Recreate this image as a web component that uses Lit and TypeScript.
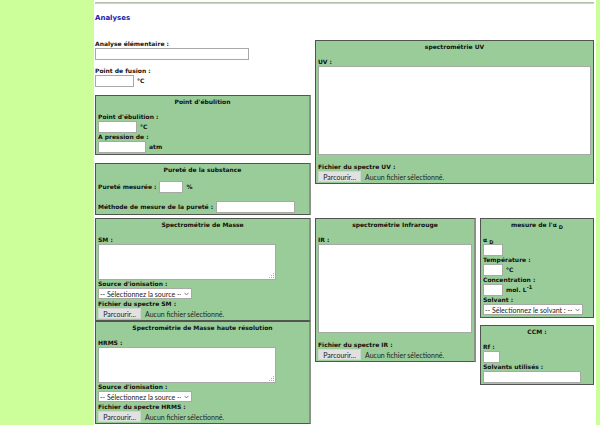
import { LitElement, html, css, nothing } from "lit";
import { customElement, property, state } from "lit/decorators.js";

const controls = css`
  * { box-sizing: border-box; }
  input, textarea, select, button {
    margin: 0;
    border: 1px solid #a5aaa5;
    border-radius: 0;
    background: #fff;
    color: #222;
    font: 7px/8px Lato, "Noto Sans", sans-serif;
  }
  input { height: 12px; padding: 0 2px; }
  label { line-height: 8px; }
`;

@customElement("form-panel")
export class FormPanel extends LitElement {
  static styles = css`
    :host {
      display: block;
      box-sizing: border-box;
      border: 1px solid #505550;
      padding: 2px 2px 1px;
      background: #99cc99;
    }
    :host([shaded]) { border-right: 2px solid #8a928a; }
    h2 {
      margin: 0 0 7px;
      font-size: 6px;
      line-height: 8px;
      text-align: center;
    }
  `;
  render() {
    return html`<h2><slot name="title"></slot></h2><slot></slot>`;
  }
}

@customElement("file-field")
export class FileField extends LitElement {
  @property() label = "";
  @state() private fileName = "";
  static styles = [controls, css`
    :host { display: block; }
    label { display: block; }
    .line { display: flex; align-items: center; gap: 4px; font: 7px/8px Lato, "Noto Sans", sans-serif; color: #222; }
    button { width: 43px; height: 11px; padding: 0; border-color: #d0d5d0; background: #e1e1e1; }
    input { display: none; }
  `];
  private pick() {
    this.renderRoot.querySelector<HTMLInputElement>("input")?.click();
  }
  private changed(e: Event) {
    this.fileName = (e.target as HTMLInputElement).files?.[0]?.name ?? "";
  }
  render() {
    return html`
      <label for="browse">${this.label}</label>
      <div class="line">
        <button id="browse" type="button" @click=${this.pick}>Parcourir...</button>
        <input type="file" @change=${this.changed} />
        <span>${this.fileName || "Aucun fichier sélectionné."}</span>
      </div>`;
  }
}

@customElement("app-root")
export class AppRoot extends LitElement {
  static styles = [controls, css`
    :host {
      display: flex;
      min-height: 100vh;
      background: #ccff99;
      color: #111;
      font: bold 6px/8px "DejaVu Sans", Verdana, sans-serif;
    }
    main {
      flex: 1;
      min-width: 0;
      margin: 0 4px 0 94px;
      padding: 2px 2px 0 1px;
      background: #fff;
    }
    hr { margin: 0; height: 2px; border: 0; border-top: 1px solid #b4bea8; border-bottom: 1px solid #c8d6ba; }
    h1 { margin: 9px 0 17px; font-size: 7px; line-height: 10px; color: #1a1aa6; }
    .grid { display: grid; grid-template-columns: 216fr 161fr 114fr; gap: 3px 4px; align-items: start; }
    .basics { display: flex; flex-direction: column; gap: 8px; }
    .free { display: flex; flex-direction: column; gap: 7px; }
    .wide { grid-column: span 2; }
    .side { display: flex; flex-direction: column; gap: 7px; }
    .field { display: flex; flex-direction: column; align-items: flex-start; }
    .unit, .inline { display: flex; align-items: center; gap: 3px; }
    .inline + .inline { margin-top: 8px; }
    .w16 { width: 17px; }
    .w20 { width: 20px; }
    .w24 { width: 24px; }
    .w39 { width: 39px; }
    .w48 { width: 48px; }
    .w79 { width: 79px; }
    .w94 { width: 94px; }
    .w98 { width: 98px; }
    .w100 { width: 100px; }
    .w154 { width: 154px; }
    textarea { display: block; width: 100%; padding: 2px; resize: none; }
    .spectrum { height: 89px; margin-bottom: 8px; }
    .notes { position: relative; width: 178px; height: 36px; }
    .notes textarea { height: 100%; }
    .grip { position: absolute; right: 2px; bottom: 2px; width: 5px; height: 5px; pointer-events: none; }
    .select { position: relative; margin-bottom: 1px; }
    .select select { display: block; appearance: none; height: 11px; padding: 0 10px 0 1px; }
    .chevron { position: absolute; right: 3px; top: 4px; width: 5px; height: 4px; pointer-events: none; }
    sub, sup { font-size: 5px; line-height: 0; }
  `];

  private input(id: string, label: string, width: string, unit: unknown = nothing) {
    return html`<div class="field">
      <label for=${id}>${label}</label>
      <div class="unit"><input id=${id} class=${width} /><span>${unit}</span></div>
    </div>`;
  }

  private select(id: string, label: string, prompt: string, width: string) {
    return html`<div class="field">
      <label for=${id}>${label}</label>
      <div class="select">
        <select id=${id} class=${width}><option>${prompt}</option></select>
        <svg class="chevron" viewBox="0 0 5 4"><path d="M.5 .8L2.5 3L4.5 .8" fill="none" stroke="#666" stroke-width=".8" /></svg>
      </div>
    </div>`;
  }

  private mass(id: string, title: string) {
    return html`<form-panel shaded>
      <span slot="title">${title}</span>
      <div class="field">
        <label for=${id}>${id} :</label>
        <div class="notes">
          <textarea id=${id}></textarea>
          <svg class="grip" viewBox="0 0 5 5"><path d="M4 0h1v1h-1zM2 2h1v1h-1zM4 2h1v1h-1zM0 4h1v1h-1zM2 4h1v1h-1zM4 4h1v1h-1z" fill="#aaa" /></svg>
        </div>
      </div>
      ${this.select(`${id}-source`, "Source d'ionisation :", "-- Sélectionnez la source --", "w94")}
      <file-field label=${`Fichier du spectre ${id} :`}></file-field>
    </form-panel>`;
  }

  render() {
    return html`<main>
      <hr />
      <h1>Analyses</h1>
      <div class="grid">
        <div class="basics">
          <div class="free">
            ${this.input("elementaire", "Analyse élémentaire :", "w154")}
            ${this.input("fusion", "Point de fusion :", "w39", "°C")}
          </div>
          <form-panel shaded>
            <span slot="title">Point d'ébulition</span>
            ${this.input("ebulition", "Point d'ébulition :", "w39", "°C")}
            ${this.input("pression", "A pression de :", "w48", "atm")}
          </form-panel>
          <form-panel shaded>
            <span slot="title">Pureté de la substance</span>
            <div class="inline"><label for="purete">Pureté mesurée :</label><input id="purete" class="w24" /><span>%</span></div>
            <div class="inline"><label for="methode">Méthode de mesure de la pureté :</label><input id="methode" class="w79" /></div>
          </form-panel>
        </div>
        <form-panel class="wide">
          <span slot="title">spectrométrie UV</span>
          <label for="uv">UV :</label>
          <textarea id="uv" class="spectrum"></textarea>
          <file-field label="Fichier du spectre UV :"></file-field>
        </form-panel>
        <div>
          ${this.mass("SM", "Spectrométrie de Masse")}
          ${this.mass("HRMS", "Spectrométrie de Masse haute résolution")}
        </div>
        <form-panel shaded>
          <span slot="title">spectrométrie Infrarouge</span>
          <label for="ir">IR :</label>
          <textarea id="ir" class="spectrum"></textarea>
          <file-field label="Fichier du spectre IR :"></file-field>
        </form-panel>
        <div class="side">
          <form-panel>
            <span slot="title">mesure de l'α <sub>D</sub></span>
            <div class="field">
              <label for="alpha">α <sub>D</sub></label>
              <input id="alpha" class="w20" />
            </div>
            ${this.input("temperature", "Température :", "w20", "°C")}
            ${this.input("concentration", "Concentration :", "w20", html`mol. L<sup>-1</sup>`)}
            ${this.select("solvant", "Solvant :", "-- Sélectionnez le solvant : --", "w100")}
          </form-panel>
          <form-panel>
            <span slot="title">CCM :</span>
            ${this.input("rf", "Rf :", "w16")}
            ${this.input("solvants", "Solvants utilisés :", "w98")}
          </form-panel>
        </div>
      </div>
    </main>`;
  }
}
